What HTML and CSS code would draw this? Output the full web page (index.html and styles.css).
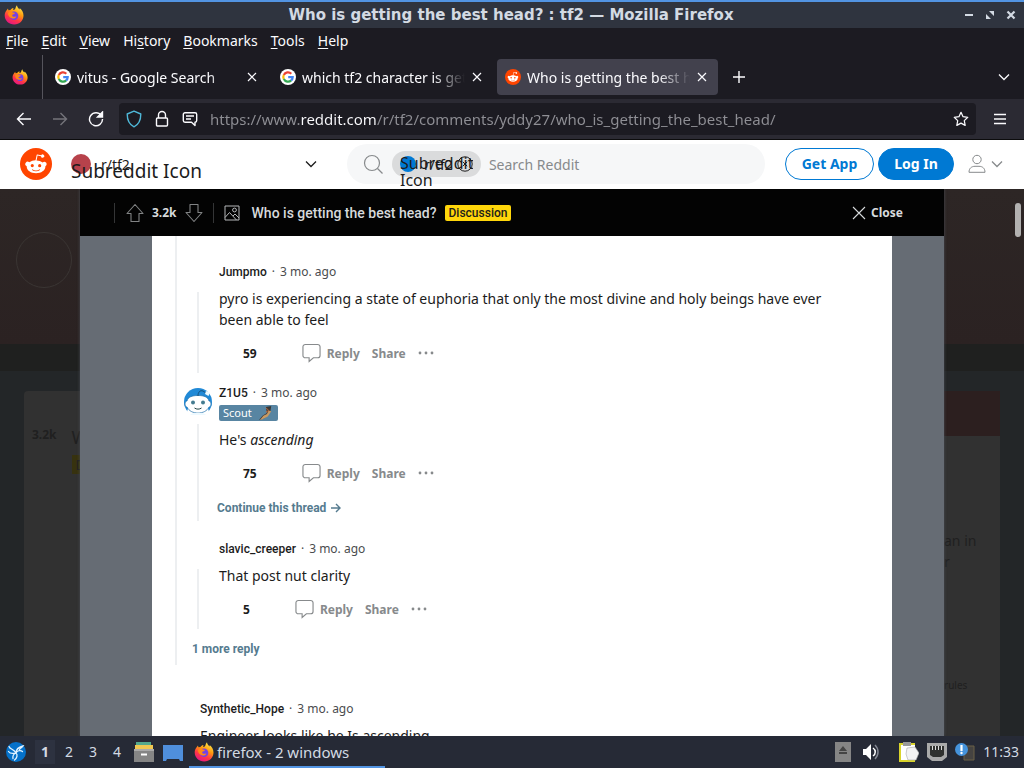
FILE: index.html
```
<!DOCTYPE html>
<html lang="en">
<head>
  <meta charset="UTF-8">
  <meta name="viewport" content="width=device-width, initial-scale=1.0">
  <title>Who is getting the best head? : tf2</title>
  <link rel="stylesheet" href="styles.css">
</head>
<body>
  <!-- Shared icons -->
  <svg class="defs" aria-hidden="true">
    <defs>
      <linearGradient id="fx" x1="0.8" y1="0" x2="0.3" y2="1">
        <stop offset="0" stop-color="#fff44f"/>
        <stop offset="0.4" stop-color="#ff980e"/>
        <stop offset="0.7" stop-color="#ff3647"/>
        <stop offset="1" stop-color="#e31587"/>
      </linearGradient>
      <symbol id="firefox" viewBox="0 0 20 20">
        <path fill="url(#fx)" d="M2.6 5.2 4 3.4l.4 1.9 2-.3C7.500 3.500 8.700 3 9.600 3c-.5.8-.5 1.500-.2 2 1.300-.3 2-1 2.200-2.300.2-.9.600-1.700 1.400-2.400.1 2 1.200 2.900 2.600 4.100.2-.5.2-.9 0-1.400C18 4.800 19.500 7.500 19.500 10.500c0 5-4 9-9.300 9-5.200 0-9.500-4-9.500-9 0-2 .6-3.800 1.900-5.300z"/>
        <circle cx="10" cy="10.800" r="4.300" fill="#7542e5"/>
        <path fill="#ff8a16" d="M4 8c1.500-1.500 3.500-1.600 5-.6 1 .1 1.700.3 2 .7-.3.8-1.300 1.200-2.200 1.500-1 .4-.8 1.700.3 2.100 1.200.4 2.200-.5 3.300-.2-.5 1.500-2.200 2.300-4 2C5.700 13 3.800 10.800 4 8z"/>
      </symbol>
      <symbol id="google" viewBox="0 0 16 16">
        <circle cx="8" cy="8" r="8" fill="#fff"/>
        <g fill="none" stroke-width="2.200">
          <path stroke="#ea4335" d="M3.800 6A4.700 4.700 0 0 1 11.300 4.700"/>
          <path stroke="#fbbc05" d="M3.800 10.100A4.700 4.700 0 0 1 3.800 5.900"/>
          <path stroke="#34a853" d="M11.200 11.400A4.700 4.700 0 0 1 3.800 10"/>
          <path stroke="#4285f4" d="M8.200 8.100H12.700A4.700 4.700 0 0 1 11.100 11.500"/>
        </g>
      </symbol>
      <symbol id="reddit" viewBox="0 0 20 20">
        <circle cx="10" cy="10" r="10" fill="#ff4500"/>
        <path fill="#fff" d="M16.670 10a1.460 1.460 0 0 0-2.470-1 7.120 7.120 0 0 0-3.850-1.230l.65-3.080 2.130.45a1 1 0 1 0 .13-.61L10.820 4a.31.31 0 0 0-.37.240l-.74 3.470a7.140 7.140 0 0 0-3.900 1.230 1.460 1.460 0 1 0-1.610 2.390 2.870 2.870 0 0 0 0 .44c0 2.240 2.610 4.060 5.830 4.060s5.830-1.820 5.830-4.060a2.870 2.870 0 0 0 0-.44 1.460 1.460 0 0 0 .81-1.330zm-10 1a1 1 0 1 1 2 0 1 1 0 0 1-2 0zm5.810 2.750a3.840 3.840 0 0 1-2.470.77 3.840 3.840 0 0 1-2.470-.77.270.270 0 0 1 .38-.38 3.270 3.270 0 0 0 2.090.63 3.280 3.280 0 0 0 2.090-.61.270.270 0 1 1 .39.380zm-.18-1.710a1 1 0 1 1 0-2 1 1 0 0 1 0 2z"/>
      </symbol>
      <symbol id="cross" viewBox="0 0 10 10">
        <path d="M1 1l8 8M9 1 1 9" fill="none" stroke="currentColor" stroke-width="1.200"/>
      </symbol>
      <symbol id="chevron" viewBox="0 0 12 8">
        <path d="M1 1.500l5 5 5-5" fill="none" stroke="currentColor" stroke-width="1.300"/>
      </symbol>
      <symbol id="bubble" viewBox="0 0 20 20">
        <path d="M3.500 1h13A2.500 2.500 0 0 1 19 3.500v9a2.500 2.500 0 0 1-2.500 2.500H12l-4.500 4V15h-4A2.500 2.500 0 0 1 1 12.500v-9A2.500 2.500 0 0 1 3.500 1z" fill="none" stroke="currentColor" stroke-width="1.200"/>
      </symbol>
      <symbol id="dots" viewBox="0 0 16 4">
        <circle cx="2" cy="2" r="1.400"/><circle cx="8" cy="2" r="1.400"/><circle cx="14" cy="2" r="1.400"/>
      </symbol>
      <symbol id="arrow" viewBox="0 0 18 20">
        <path d="M9 1.500 17 10.500h-4V18.500H5v-8H1z" fill="none" stroke="currentColor" stroke-width="1.100" stroke-linejoin="round"/>
      </symbol>
    </defs>
  </svg>

  <!-- Window title -->
  <header class="titlebar">
    <svg class="titlebar-icon"><use href="#firefox"/></svg>
    <span class="titlebar-text">Who is getting the best head? : tf2 — Mozilla Firefox</span>
    <div class="titlebar-buttons">
      <button aria-label="Minimize"><svg viewBox="0 0 10 10"><path d="M1 5h8" stroke="#d3dae3" stroke-width="2"/></svg></button>
      <button aria-label="Restore"><svg viewBox="0 0 10 10"><path d="M4 1h5v5zM1 4v5h5z" fill="#d3dae3"/></svg></button>
      <button aria-label="Close window"><svg viewBox="0 0 10 10"><path d="M1.500 1.500l7 7M8.500 1.500l-7 7" stroke="#d3dae3" stroke-width="2.200"/></svg></button>
    </div>
  </header>

  <nav class="menubar" aria-label="Menu">
    <button><u>F</u>ile</button>
    <button><u>E</u>dit</button>
    <button><u>V</u>iew</button>
    <button>Hi<u>s</u>tory</button>
    <button><u>B</u>ookmarks</button>
    <button><u>T</u>ools</button>
    <button><u>H</u>elp</button>
  </nav>

  <div class="tabbar">
    <button class="pinned" aria-label="Firefox View"><svg><use href="#firefox"/></svg></button>
    <div class="tab">
      <svg class="favicon"><use href="#google"/></svg>
      <button class="tab-title">vitus - Google Search</button>
      <button class="tab-close" aria-label="Close tab"><svg><use href="#cross"/></svg></button>
    </div>
    <div class="tab">
      <svg class="favicon"><use href="#google"/></svg>
      <button class="tab-title">which tf2 character is getting head</button>
      <button class="tab-close" aria-label="Close tab"><svg><use href="#cross"/></svg></button>
    </div>
    <div class="tab active">
      <svg class="favicon"><use href="#reddit"/></svg>
      <button class="tab-title">Who is getting the best head? : tf2</button>
      <button class="tab-close" aria-label="Close tab"><svg><use href="#cross"/></svg></button>
    </div>
    <button class="new-tab" aria-label="New tab"><svg viewBox="0 0 14 14"><path d="M7 1v12M1 7h12" stroke="#fbfbfe" stroke-width="1.400"/></svg></button>
    <button class="all-tabs" aria-label="List all tabs"><svg><use href="#chevron"/></svg></button>
  </div>

  <div class="navbar">
    <button class="nav-button" aria-label="Back"><svg viewBox="0 0 16 16"><path d="M15 8H1.500M7.500 2l-6 6 6 6" /></svg></button>
    <button class="nav-button" aria-label="Forward" disabled><svg viewBox="0 0 16 16"><path d="M1 8h13.500M8.500 2l6 6-6 6"/></svg></button>
    <button class="nav-button" aria-label="Reload"><svg viewBox="0 0 16 16"><path d="M13.300 4.500A6.500 6.500 0 1 0 14.500 8"/><path d="M14.500 1v5h-5z" fill="#fbfbfe"/></svg></button>
    <div class="urlbar">
      <svg class="shield" viewBox="0 0 16 18"><path d="M8 1.200 14.800 4c0 6-2 10.500-6.800 12.800C3.200 14.500 1.200 10 1.200 4z"/></svg>
      <svg viewBox="0 0 16 18"><path d="M4.500 8V5a3.500 3.500 0 0 1 7 0v3M3.500 8h9a1 1 0 0 1 1 1v6a1 1 0 0 1-1 1h-9a1 1 0 0 1-1-1V9a1 1 0 0 1 1-1z"/></svg>
      <svg viewBox="0 0 16 18"><path d="M3 2.800h10a1.700 1.700 0 0 1 1.700 1.700v6A1.700 1.700 0 0 1 13 12.200V15.500L9.500 12.200H3a1.700 1.700 0 0 1-1.700-1.700v-6A1.700 1.700 0 0 1 3 2.800zM4 6h8M4 9h5"/></svg>
      <input class="url" type="text" aria-label="Address" value="https://www.reddit.com/r/tf2/comments/yddy27/who_is_getting_the_best_head/">
      <button class="bookmark" aria-label="Bookmark this page"><svg viewBox="0 0 18 18"><path d="M9 1.500l2.300 4.900 5.300.7-3.900 3.700 1 5.400L9 13.600l-4.700 2.600 1-5.400L1.400 7.100l5.300-.7z"/></svg></button>
    </div>
    <button class="nav-button menu" aria-label="Open menu"><svg viewBox="0 0 16 16"><path d="M2 3.500h12M2 8h12M2 12.500h12"/></svg></button>
  </div>

  <!-- Reddit header -->
  <header class="site-header">
    <a href="#" class="logo" aria-label="Home"><svg><use href="#reddit"/></svg></a>
    <button class="community">
      <span class="community-dot"></span>
      <span class="community-name">r/tf2</span>
      <span class="community-alt">Subreddit Icon</span>
      <svg><use href="#chevron"/></svg>
    </button>
    <div class="search">
      <svg class="search-icon" viewBox="0 0 20 20"><circle cx="9" cy="9" r="7.500"/><path d="M14.500 14.500l5 5"/></svg>
      <div class="chip">
        <span class="chip-dot"></span>
        <span class="chip-name">r/tf2</span>
        <span class="chip-alt">Subreddit Icon</span>
        <button aria-label="Remove r/tf2"><svg viewBox="0 0 16 16"><circle cx="8" cy="8" r="7.200"/><path d="M5.800 5.800l4.400 4.400M10.200 5.800l-4.400 4.400"/></svg></button>
      </div>
      <input type="search" placeholder="Search Reddit" aria-label="Search Reddit">
    </div>
    <button class="pill">Get App</button>
    <button class="pill filled">Log In</button>
    <button class="account" aria-label="Account">
      <svg class="person" viewBox="0 0 18 20"><circle cx="9" cy="5.500" r="4.200"/><path d="M1 18.300c0-4 2.500-6 6-6h4c3.500 0 6 2 6 6z"/></svg>
      <svg class="caret"><use href="#chevron"/></svg>
    </button>
  </header>

  <main class="page">
    <!-- Dimmed community page behind the post -->
    <div class="backdrop" aria-hidden="true">
      <div class="banner"><div class="banner-icon"></div></div>
      <div class="banner-strip"></div>
      <div class="columns">
        <div class="post-card">
          <span class="post-score">3.2k</span>
          <div>
            <div class="post-title">Who</div>
            <div class="post-flair">D</div>
          </div>
        </div>
        <div class="side-card">
          <div class="side-head"></div>
          <div class="side-text">an in<br>r</div>
          <div class="side-note">rules</div>
        </div>
      </div>
    </div>

    <div class="overlay">
      <div class="post-bar">
        <div class="votes">
          <button aria-label="Upvote"><svg><use href="#arrow"/></svg></button>
          <span>3.2k</span>
          <button class="down" aria-label="Downvote"><svg><use href="#arrow"/></svg></button>
        </div>
        <svg class="image-icon" viewBox="0 0 16 16"><path d="M1 1h14v14H1zM1 12.500l4.500-5 7 7.500M9 11l2-2 4 4"/><circle cx="10.500" cy="5" r="1.900"/></svg>
        <h1>Who is getting the best head?</h1>
        <span class="tag">Discussion</span>
        <button class="close"><svg viewBox="0 0 14 14"><path d="M1 1l12 12M13 1 1 13" stroke="#d7dadc" stroke-width="1.100"/></svg>Close</button>
      </div>

      <section class="thread">
        <div class="replies">
          <article class="comment">
            <div class="gutter"></div>
            <div class="comment-main">
              <div class="meta"><a href="#">Jumpmo</a><span>·</span><span>3 mo. ago</span></div>
              <p>pyro is experiencing a state of euphoria that only the most divine and holy beings have ever been able to feel</p>
              <div class="actions">
                <span class="score">59</span>
                <button><svg class="bubble"><use href="#bubble"/></svg>Reply</button>
                <button>Share</button>
                <button aria-label="More"><svg class="dots"><use href="#dots"/></svg></button>
              </div>
            </div>
          </article>

          <article class="comment long">
            <div class="gutter avatar-gutter">
              <svg class="avatar" viewBox="0 0 28 28">
                <circle cx="14" cy="14" r="14" fill="#2089d6"/>
                <path d="M3 25c0-3 1-5 3-6h16c2 1 3 3 3 6v3H3z" fill="#fff"/>
                <path d="M1 16c0-2 1-3 2-3C4 9 8 7.500 14 7.500S24 9 25 13c1 0 2 1 2 3s-1 3-2 3c-2 4-6 6-11 6S5 23 3 19c-1 0-2-1-2-3z" fill="#fff" stroke="#186ba9" stroke-width=".7"/>
                <path d="M14 8c0-4 2-6 5-5l3 2" fill="none" stroke="#154f79" stroke-width="1"/>
                <path d="M22 3l4 1.500L24.500 8 21 6z" fill="#eefaff"/>
                <circle cx="9" cy="14.500" r="2" fill="#447c90"/><circle cx="19" cy="14.500" r="2" fill="#447c90"/>
                <path d="M10.500 20c2 1.500 5 1.500 7 0" fill="none" stroke="#244" stroke-width="1"/>
                <path d="M6 27c2-3 14-3 16 0z" fill="#edf9ff"/>
              </svg>
            </div>
            <div class="comment-main">
              <div class="meta"><a href="#">Z1U5</a><span>·</span><span>3 mo. ago</span></div>
              <div class="user-flair">Scout
                <svg viewBox="0 0 16 16"><path d="M8 1l6-1-1 6-4 5-3 3-6 2 4-5 5-3z" fill="#393735"/><path d="M11 5l3 1-4 6-6 3-3 1 4-5 4-2z" fill="#c89a63"/><path d="M8 2l3 3-3 2" fill="none" stroke="#d66a32"/></svg>
              </div>
              <p>He's <em>ascending</em></p>
              <div class="actions">
                <span class="score">75</span>
                <button><svg class="bubble"><use href="#bubble"/></svg>Reply</button>
                <button>Share</button>
                <button aria-label="More"><svg class="dots"><use href="#dots"/></svg></button>
              </div>
              <a href="#" class="continue">Continue this thread
                <svg viewBox="0 0 10 10"><path d="M0 5h9M5 1l4 4-4 4"/></svg>
              </a>
            </div>
          </article>

          <article class="comment">
            <div class="gutter"></div>
            <div class="comment-main">
              <div class="meta"><a href="#">slavic_creeper</a><span>·</span><span>3 mo. ago</span></div>
              <p>That post nut clarity</p>
              <div class="actions">
                <span class="score">5</span>
                <button><svg class="bubble"><use href="#bubble"/></svg>Reply</button>
                <button>Share</button>
                <button aria-label="More"><svg class="dots"><use href="#dots"/></svg></button>
              </div>
            </div>
          </article>

          <a href="#" class="more">1 more reply</a>
        </div>

        <article class="comment top-level">
          <div class="gutter"></div>
          <div class="comment-main">
            <div class="meta"><a href="#">Synthetic_Hope</a><span>·</span><span>3 mo. ago</span></div>
            <p>Engineer looks like he Is ascending</p>
          </div>
        </article>
      </section>
    </div>
    <div class="scroll-thumb"></div>
  </main>

  <!-- Desktop panel -->
  <footer class="taskbar">
    <button class="start" aria-label="Applications"><svg viewBox="0 0 20 20"><circle cx="10" cy="10" r="10" fill="#0571c9"/><path d="M3 4.500c1 3 5 2.500 7 6.500M2.500 9.500c2 3 5 2 7.500 1.500M10 11c0-4 3-6 7-7-1 1.500-2.500 2-3.500 3.500M10 11c1-2 4-3.500 6.500-1.500M10 11c2 2 1 5-1.500 7M10 11c-2.500 1-3.500 3-3 5.500" fill="none" stroke="#e2f3ff" stroke-width="1.300" stroke-linecap="round"/></svg></button>
    <button class="desk current">1</button>
    <button class="desk">2</button>
    <button class="desk">3</button>
    <button class="desk">4</button>
    <button class="launcher" aria-label="Files"><svg viewBox="0 0 20 20"><path d="M2 0h15v5H2z" fill="#54a98d"/><path d="M1 3h18v4H1z" fill="#f0c852"/><path d="M0 7h20v13H0z" fill="#858585"/><path d="M0 7h20v2H0z" fill="#aaa"/><path d="M7 12.500h6" stroke="#fff" stroke-width="2"/></svg></button>
    <button class="launcher" aria-label="Show desktop"><svg viewBox="0 0 20 20"><path d="M0 3h20v16h-3l-1-2H4l-1 2H0z" fill="#4f8fdc"/></svg></button>
    <button class="task"><svg><use href="#firefox"/></svg>firefox - 2 windows</button>
    <div class="tray">
      <svg class="small" viewBox="0 0 16 20"><path d="M0 0h16v20H0z" fill="#858585"/><path d="M8 4l4 5H4zM4 10h8v2H4z" fill="#444"/></svg>
      <svg class="speaker" viewBox="0 0 16 16"><path d="M0 5h3l5-5v16l-5-5H0z" fill="#fff"/><path d="M10 4c3 2 3 6 0 8" fill="none" stroke="#fff" stroke-width="1.500"/><path d="M12 1c4 4 4 10 0 14" fill="none" stroke="#808590" stroke-width="1.500"/></svg>
      <svg class="clip" viewBox="0 0 20 20"><path d="M0 1h16v19H0z" fill="#d9d32b"/><path d="M2 3h14v15H2z" fill="#fff"/><path d="M4 0h8v4H4z" fill="#999"/><path d="M8 6l8-1 4 6-3 7H9l-2-6z" fill="#f3f3f3" stroke="#aaa" stroke-width=".6"/></svg>
      <svg viewBox="0 0 20 20"><path d="M0 1h20v14l-5 4H5l-5-4z" fill="#a9a9a9"/><path d="M3 4h14v9l-3 2H6l-3-2z" fill="#30312f"/><path d="M5.500 4v4M8.500 4v4M11.500 4v4M14.500 4v4" stroke="#ddd"/></svg>
      <svg viewBox="0 0 20 20"><path d="M9 4h10v14H9z" fill="#454341" stroke="#6b6047"/><circle cx="6.500" cy="7.500" r="6.500" fill="#4593dc"/><path d="M6.500 3v6" stroke="#fff" stroke-width="2.200"/><circle cx="6.500" cy="11" r="1.200" fill="#fff"/></svg>
      <time>11:33</time>
    </div>
  </footer>
</body>
</html>
```
FILE: styles.css
```
* {
  box-sizing: border-box;
}
body {
  margin: 0;
  height: 100vh;
  display: flex;
  flex-direction: column;
  overflow: hidden;
  font-family: "Noto Sans", sans-serif;
  font-size: 14px;
  background: #1c1b22;
}
button {
  padding: 0;
  border: 0;
  background: none;
  color: inherit;
  font: inherit;
  cursor: pointer;
}
a {
  color: inherit;
  text-decoration: none;
}
svg {
  display: block;
  flex: none;
}
.defs {
  position: absolute;
  width: 0;
  height: 0;
}

/* window title */
.titlebar {
  display: flex;
  align-items: center;
  flex: none;
  height: 28px;
  padding: 0 8px 0 4px;
  border-top: 2px solid #5294e2;
  background: #2f343f;
  color: #d3dae3;
}
.titlebar-icon {
  width: 20px;
  height: 20px;
  margin-right: 34px;
}
.titlebar-text {
  flex: 1;
  text-align: center;
  font-family: "DejaVu Sans", sans-serif;
  font-size: 15px;
  font-weight: bold;
  white-space: nowrap;
}
.titlebar-buttons {
  display: flex;
  gap: 11px;
}
.titlebar-buttons svg {
  width: 10px;
  height: 10px;
}

.menubar {
  display: flex;
  align-items: center;
  flex: none;
  gap: 13px;
  height: 27px;
  padding: 0 6px 2px;
  color: #fbfbfe;
}
.menubar u {
  text-underline-offset: 2px;
}

/* tabs */
.tabbar {
  display: flex;
  align-items: center;
  flex: none;
  height: 44px;
  padding-right: 14px;
  color: #fbfbfe;
}
.pinned {
  align-self: stretch;
  width: 43px;
  padding-left: 12px;
  border-right: 1px solid #55545c;
}
.pinned svg {
  width: 16px;
  height: 16px;
}
.tab {
  display: flex;
  align-items: center;
  width: 221px;
  height: 36px;
  margin-left: 4px;
  padding: 0 8px;
  border-radius: 4px;
}
.tab.active {
  background: #42414d;
}
.favicon {
  width: 16px;
  height: 16px;
}
.tab-title {
  flex: 1;
  min-width: 0;
  margin: 0 4px 0 6px;
  overflow: hidden;
  white-space: nowrap;
  text-align: left;
  mask-image: linear-gradient(to left, transparent, #000 32px);
}
.tab-close svg {
  width: 10px;
  height: 10px;
  margin: 3px;
}
.new-tab {
  margin-left: 14px;
}
.new-tab svg {
  width: 14px;
  height: 14px;
}
.all-tabs {
  margin-left: auto;
}
.all-tabs svg {
  width: 12px;
  height: 8px;
}

/* address row */
.navbar {
  display: flex;
  align-items: center;
  flex: none;
  height: 41px;
  padding: 0 16px;
  border-bottom: 1px solid #0c0c0d;
  background: #2b2a33;
}
.nav-button {
  margin-right: 20px;
}
.nav-button svg {
  width: 16px;
  height: 16px;
  fill: none;
  stroke: #fbfbfe;
  stroke-width: 1.4;
}
.nav-button:disabled svg {
  opacity: 0.35;
}
.nav-button.menu {
  margin: 0 0 0 16px;
}
.urlbar {
  display: flex;
  align-items: center;
  flex: 1;
  gap: 12px;
  height: 32px;
  margin-left: -5px;
  padding: 0 7px;
  border-radius: 4px;
  background: #1c1b22;
}
.urlbar svg {
  width: 16px;
  height: 18px;
  fill: none;
  stroke: #fbfbfe;
  stroke-width: 1.4;
  stroke-linejoin: round;
}
.urlbar .shield {
  stroke: #4fb8d8;
}
.url {
  flex: 1;
  min-width: 0;
  height: 24px;
  padding: 0;
  border: 0;
  outline: 0;
  font: inherit;
  font-size: 15px;
  color: transparent;
  /* host part is brighter than the rest of the address */
  background: linear-gradient(to right, #8f8f95 91px, #fbfbfe 91px, #fbfbfe 167px, #8f8f95 167px);
  background-clip: text;
}

/* site header */
.site-header {
  position: relative;
  z-index: 2;
  display: flex;
  align-items: center;
  flex: none;
  height: 49px;
  padding: 0 21px 1px 20px;
  background: #fff;
  color: #1c1c1c;
}
.logo svg {
  width: 32px;
  height: 32px;
}
.community {
  position: relative;
  display: flex;
  align-items: center;
  flex: 1;
  gap: 10px;
  margin: 0 30px 0 19px;
}
.community-dot {
  width: 20px;
  height: 20px;
  border-radius: 50%;
  background: #b7424b;
}
.community-alt {
  position: absolute;
  top: 4px;
  left: 0;
  font-size: 19px;
  line-height: 26px;
  white-space: nowrap;
}
.community svg {
  width: 12px;
  height: 8px;
  margin-left: auto;
}
.search {
  display: flex;
  align-items: center;
  width: 418px;
  height: 40px;
  padding: 0 16px;
  border-radius: 20px;
  background: #f6f7f8;
}
.search-icon {
  width: 20px;
  height: 20px;
  fill: none;
  stroke: #878a8c;
  stroke-width: 1.2;
}
.chip {
  position: relative;
  display: flex;
  align-items: center;
  height: 26px;
  margin: 0 8px 0 9px;
  padding: 0 8px;
  border-radius: 13px;
  background: #dadbdc;
}
.chip-dot {
  width: 16px;
  height: 16px;
  margin-right: 8px;
  border-radius: 50%;
  background: #0079d3;
}
.chip-alt {
  position: absolute;
  top: 4px;
  left: 8px;
  width: 73px;
  overflow: hidden;
  font-size: 16px;
  line-height: 17px;
}
.chip button {
  position: relative;
  margin-left: 4px;
}
.chip svg {
  width: 16px;
  height: 16px;
  fill: none;
  stroke: #1c1c1c;
}
.search input {
  flex: 1;
  min-width: 0;
  padding: 0;
  border: 0;
  outline: 0;
  background: none;
  font: inherit;
}
.search input::placeholder {
  color: #878a8c;
}
.pill {
  width: 89px;
  height: 32px;
  margin-left: 20px;
  padding-bottom: 2px;
  border: 1px solid #0079d3;
  border-radius: 16px;
  color: #0079d3;
  font-weight: bold;
}
.pill.filled {
  width: 76px;
  margin-left: 4px;
  background: #0079d3;
  color: #fff;
}
.account {
  display: flex;
  align-items: center;
  gap: 5px;
  margin-left: 14px;
  color: #878a8c;
}
.person {
  width: 18px;
  height: 20px;
  fill: none;
  stroke: currentColor;
}
.caret {
  width: 12px;
  height: 8px;
}

/* page */
.page {
  position: relative;
  flex: 1;
  min-height: 0;
  overflow: hidden;
}
.backdrop {
  position: absolute;
  inset: 0;
  background: #232628;
  color: #202020;
}
.banner {
  height: 155px;
  padding: 43px 16px;
  background: linear-gradient(#2d2625, #2b2222);
}
.banner-icon {
  width: 56px;
  height: 56px;
  border: 1px solid #3a3533;
  border-radius: 50%;
}
.banner-strip {
  height: 27px;
  background: #1f201f;
}
.columns {
  display: flex;
  gap: 24px;
  height: 100%;
  padding: 20px 24px 0;
}
.post-card {
  display: flex;
  flex: 1;
  gap: 15px;
  padding: 34px 8px;
  border-radius: 4px;
  background: #313131;
}
.post-score {
  font-size: 12px;
  font-weight: bold;
  line-height: 20px;
}
.post-title {
  font-size: 18px;
  line-height: 24px;
}
.post-flair {
  margin-top: 6px;
  width: 60px;
  padding-left: 4px;
  background: #37320f;
}
.side-card {
  width: 312px;
  background: #313131;
}
.side-head {
  height: 45px;
  background: #2c1f1f;
}
.side-text {
  padding: 94px 0 0 256px;
  line-height: 21px;
}
.side-note {
  padding: 106px 0 0 256px;
  font-size: 10px;
}
.overlay {
  position: relative;
  display: flex;
  flex-direction: column;
  height: 100%;
  margin: 0 80px;
  background: #666c74;
  box-shadow: 0 0 3px #4a4e54;
}
.post-bar {
  display: flex;
  align-items: center;
  flex: none;
  height: 47px;
  padding: 0 41px 0 34px;
  background: #030303;
  color: #d7dadc;
}
.votes {
  display: flex;
  align-items: center;
  gap: 8px;
  padding: 0 10px 0 11px;
  border-left: 1px solid #343536;
  border-right: 1px solid #343536;
  font-size: 12px;
  font-weight: bold;
}
.votes svg {
  width: 18px;
  height: 20px;
  color: #818384;
}
.down svg {
  transform: rotate(180deg);
}
.image-icon {
  width: 16px;
  height: 16px;
  margin: 0 12px 0 10px;
  fill: none;
  stroke: #b5b7b9;
}
.post-bar h1 {
  margin: 0;
  font-family: Roboto, sans-serif;
  font-size: 14px;
  font-weight: 500;
}
.tag {
  margin-left: 8px;
  padding: 0 4px;
  border-radius: 2px;
  background: #ffd60a;
  color: #1c1c1c;
  font-family: Roboto, sans-serif;
  font-size: 12px;
  font-weight: 500;
  line-height: 16px;
}
.close {
  display: flex;
  align-items: center;
  gap: 5px;
  margin-left: auto;
  font-size: 12px;
  font-weight: bold;
}
.close svg {
  width: 14px;
  height: 14px;
}

/* comments */
.thread {
  flex: 1;
  min-height: 0;
  margin: 0 52px 0 72px;
  padding-left: 23px;
  overflow: hidden;
  background: #fff;
  color: #1c1c1c;
}
.replies {
  display: flex;
  flex-direction: column;
  gap: 12px;
  padding: 28px 60px 8px 7px;
  border-left: 2px solid #edeff1;
}
.comment {
  display: flex;
  gap: 7px;
}
.gutter {
  display: flex;
  flex-direction: column;
  align-items: center;
  gap: 8px;
  width: 28px;
  padding-top: 28px;
}
.gutter::after {
  content: "";
  flex: 1;
  width: 2px;
  background: #edeff1;
}
.avatar-gutter {
  padding-top: 3px;
}
.avatar {
  width: 28px;
  height: 28px;
}
.comment-main {
  flex: 1;
  min-width: 0;
  padding-bottom: 8px;
}
.long .comment-main {
  padding-bottom: 5px;
}
.long {
  margin-bottom: 8px;
}
.meta {
  display: flex;
  gap: 5px;
  font-size: 12px;
  line-height: 16px;
  color: #4a4c4e;
}
.meta a {
  color: #1c1c1c;
  font-family: Roboto, sans-serif;
  font-weight: 500;
}
.comment p {
  margin: 8px 0 11px;
  line-height: 21px;
}
.user-flair {
  display: flex;
  align-items: center;
  gap: 6px;
  width: fit-content;
  margin-top: 4px;
  padding: 0 4px;
  border-radius: 2px;
  background: #5885a2;
  color: #fff;
  font-size: 11px;
  line-height: 16px;
}
.user-flair svg {
  width: 16px;
  height: 14px;
}
.actions {
  display: flex;
  align-items: center;
  gap: 12px;
  height: 24px;
  padding-left: 24px;
  color: #878a8c;
  font-size: 12px;
  font-weight: bold;
}
.actions button {
  display: flex;
  align-items: center;
  gap: 6px;
}
.score {
  margin-right: 33px;
  color: #1c1c1c;
}
.bubble {
  width: 19px;
  height: 20px;
}
.dots {
  width: 16px;
  height: 4px;
  fill: #878a8c;
}
.continue,
.more {
  display: flex;
  align-items: center;
  gap: 5px;
  color: #557b8f;
  font-family: Roboto, sans-serif;
  font-size: 12px;
  font-weight: bold;
  line-height: 16px;
}
.continue {
  margin: 15px 0 0 -2px;
}
.continue svg {
  width: 10px;
  height: 10px;
  fill: none;
  stroke: currentColor;
  stroke-width: 1.4;
}
.more {
  padding-left: 8px;
}
.top-level {
  margin: 36px 0 0 -10px;
}
.top-level .gutter::after {
  visibility: hidden;
}
.scroll-thumb {
  position: absolute;
  top: 14px;
  right: 3px;
  width: 6px;
  height: 34px;
  border-radius: 3px;
  background: #b2b1b0;
}

/* desktop panel */
.taskbar {
  display: flex;
  align-items: center;
  flex: none;
  height: 32px;
  padding: 0 5px 1px 6px;
  background: #262a36;
  color: #d3dae3;
}
.start {
  margin-right: 9px;
}
.taskbar svg {
  width: 20px;
  height: 20px;
}
.desk {
  width: 20px;
  height: 24px;
  margin-right: 4px;
}
.desk.current {
  background: #2d3240;
  font-weight: bold;
}
.launcher {
  margin: 0 3px 0 6px;
}
.desk + .launcher {
  margin-left: 3px;
}
.task {
  display: flex;
  align-items: center;
  gap: 3px;
  width: 196px;
  height: 30px;
  margin: 2px 0 0 3px;
  padding: 0 5px;
  border-bottom: 2px solid #5294e2;
  font-size: 15px;
}
.tray {
  display: flex;
  align-items: center;
  gap: 8px;
  margin-left: auto;
}
.tray .small {
  width: 16px;
}
.tray .speaker {
  width: 16px;
  height: 16px;
  margin: 0 12px 0 4px;
}
```
